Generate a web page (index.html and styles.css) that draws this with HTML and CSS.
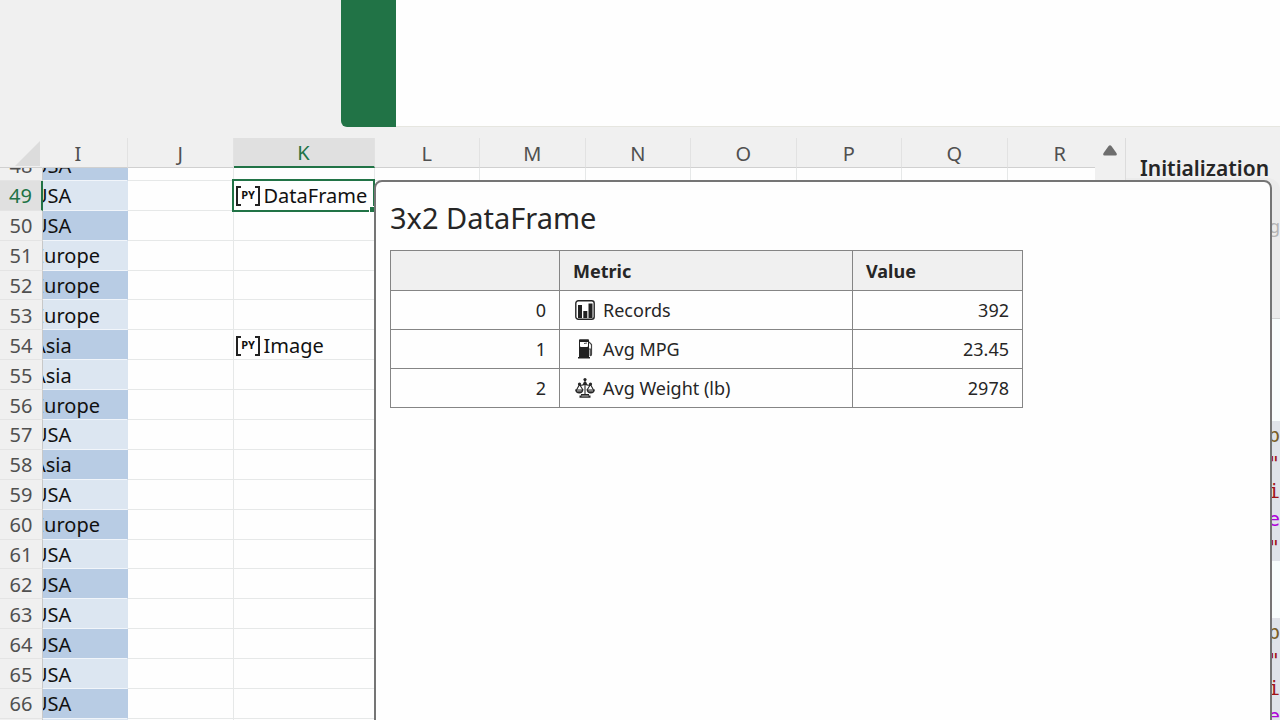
FILE: index.html
```html
<!DOCTYPE html>
<html lang="en">
<head>
    <meta charset="UTF-8">
    <meta name="viewport" content="width=device-width, initial-scale=1.0">
    <title>3x2 DataFrame</title>
    <link rel="stylesheet" href="styles.css">
</head>
<body>
  <header class="top-area">
    <div class="top-accent"></div>
    <div class="top-page"></div>
  </header>

  <main class="workspace">
    <section class="sheet">
      <div class="sheet-main">
        <table class="grid grid-head">
          <thead>
            <tr id="columns">
              <th class="row-num"><svg class="corner" viewBox="0 0 25 25"><path d="M25 0V25H0Z" fill="#dcdcdc"/></svg></th>
            </tr>
          </thead>
        </table>
        <div class="grid-scroll">
          <table class="grid grid-body">
            <tbody id="rows"></tbody>
          </table>
        </div>
      </div>
      <div class="scrollbar">
        <button class="scroll-up" aria-label="Scroll up"><svg width="14" height="11" viewBox="0 0 14 11"><path d="M5.6 1Q7-.6 8.4 1L13.4 8Q14.6 10.500 12.500 10.500H1.500Q-.6 10.500 .6 8Z" fill="#6e6e6e"/></svg></button>
      </div>
    </section>

    <aside class="editor">
      <h2 class="editor-title">Initialization</h2>
      <div class="editor-card"><span>ng</span></div>
      <div class="code">
        <div class="code-block">
          <div class="fn">p</div>
          <div class="str">"</div>
          <div class="str">i</div>
          <div class="kw">e</div>
          <div class="str">"</div>
        </div>
        <div class="code-block">
          <div class="fn">p</div>
          <div class="str">"</div>
          <div class="str">i</div>
          <div class="kw">e</div>
        </div>
      </div>
    </aside>

    <section class="card">
      <h1>3x2 DataFrame</h1>
      <table class="frame">
        <thead>
          <tr>
            <th class="index"></th>
            <th class="metric">Metric</th>
            <th class="value">Value</th>
          </tr>
        </thead>
        <tbody>
          <tr>
            <td class="num">0</td>
            <td>
              <div class="label"><svg class="icon" viewBox="0 0 20 20"><rect x=".8" y=".8" width="18.400" height="18.400" rx="2.500" fill="#fff" stroke="#262626" stroke-width="1.400"/><path d="M3 5H7V18H3ZM8.300 11H12.300V18H8.300ZM13.500 3.500H17.500V18H13.500Z" fill="#222"/></svg>Records</div>
            </td>
            <td class="num">392</td>
          </tr>
          <tr>
            <td class="num">1</td>
            <td>
              <div class="label"><svg class="icon" viewBox="0 0 20 20"><path d="M4 1Q4 .3 5 .3H13Q14 .3 14 1V18H15V19.500H3V18H4Z" fill="#222"/><path d="M5 3H13V7Q13 8 12 8H6Q5 8 5 7Z" fill="#fff"/><path d="M9 4.500L12 4" stroke="#222" stroke-width=".8"/><path d="M14 3L16.500 5.500V15Q16.500 17 15.200 16.500V10H14" fill="none" stroke="#444" stroke-width="1.200"/></svg>Avg MPG</div>
            </td>
            <td class="num">23.45</td>
          </tr>
          <tr>
            <td class="num">2</td>
            <td>
              <div class="label"><svg class="icon" viewBox="0 0 20 20"><g fill="none" stroke="#262626" stroke-width="1.100"><path d="M10 1V17M3.500 6.500Q7 8.500 10 5.500Q13 8.500 16.500 6.500M4.500 6.500L1.500 12M4.500 6.500L8 12M15.500 6.500L12 12M15.500 6.500L18.500 12"/></g><g fill="#262626"><circle cx="10" cy="1.600" r="1.600"/><circle cx="10" cy="5.500" r="1.800"/><circle cx="4.500" cy="6" r="1.600"/><circle cx="15.500" cy="6" r="1.600"/><path d="M0 11.500H8.500Q8 15.500 4.300 15.500Q.5 15.500 0 11.500ZM11.500 11.500H20Q19.500 15.500 15.700 15.500Q12 15.500 11.500 11.500ZM6 16H14V17.500H15.500V19.800H4.500V17.500H6Z"/></g><path d="M2 12.900H6.500M13.500 12.900H18M6.500 18H13.500" stroke="#fff" stroke-width=".7"/></svg>Avg Weight (lb)</div>
            </td>
            <td class="num">2978</td>
          </tr>
        </tbody>
      </table>
    </section>
  </main>

  <script src="script.js"></script>
</body>
</html>
```

FILE: styles.css
```css
* {
    box-sizing: border-box;
}

html, body {
    margin: 0;
    padding: 0;
    height: 100%;
    overflow: hidden;
    background-color: #f0f0f0;
    font-family: "Noto Sans", "Open Sans", sans-serif;
    color: #262626;
}

body {
    display: flex;
    flex-direction: column;
}

/* Top area */
.top-area {
    display: flex;
    flex: none;
    height: 127px;
    margin-bottom: 11px;
    padding-left: 341px;
}

.top-accent {
    width: 55px;
    background-color: #217346;
    border-bottom-left-radius: 6px;
}

.top-page {
    flex: 1;
    background-color: #fefefe;
    border-bottom: 1px solid #e6e6e0;
}

/* Workspace */
.workspace {
    position: relative;
    display: flex;
    flex: 1;
    min-height: 0;
}

.sheet {
    display: flex;
    flex: 1;
    min-width: 0;
}

.sheet-main {
    display: flex;
    flex-direction: column;
    flex: 1;
    min-width: 0;
    overflow: hidden;
}

.grid {
    flex: none;
    table-layout: fixed;
    border-collapse: separate;
    border-spacing: 0;
    width: 1113px;
}

.grid th, .grid td {
    padding: 2px 0 0;
    overflow: hidden;
    white-space: nowrap;
}

.grid th {
    font-size: 20px;
    font-weight: 400;
    line-height: 26px;
    color: #505050;
}

.grid .row-num {
    width: 43px;
    background-color: #f0f0f0;
    border-right: 1px solid #c8c8c8;
}

.grid .col-i {
    width: 85px;
}

.grid .col-k {
    width: 141px;
}

.grid-head th {
    height: 29px;
    border-right: 1px solid #e2e2e2;
    border-bottom: 1px solid #d0d0d0;
}

.grid-head .row-num {
    border-color: #f0f0f0;
    border-bottom-color: #d0d0d0;
}

.grid-head .col-i {
    padding-right: 14px;
}

.grid-head .col-k {
    color: #217346;
    background-color: #e0e0e0;
    border-bottom: 2px solid #217346;
}

.corner {
    display: block;
    width: 25px;
    height: 25px;
    margin-left: 15px;
}

.grid-scroll {
    flex: 1;
    min-height: 0;
    overflow: hidden;
    background-color: #fefefe;
}

/* first row is scrolled halfway under the header */
.grid-body {
    height: 598px;
    margin-top: -17px;
}

.grid-body th {
    border-bottom: 1px solid #e4e4e4;
}

.grid-body td {
    font-size: 20px;
    line-height: 26px;
    color: #111;
    border-right: 1px solid #e6e8e8;
    border-bottom: 1px solid #e6e8e8;
}

.grid-body td.col-i {
    background-color: #dce6f1;
    border-right-color: #dce6f1;
    border-bottom-color: #f1f5fa;
}

.grid-body tr:nth-child(odd) td.col-i {
    background-color: #b8cce4;
    border-right-color: #b8cce4;
}

.country {
    display: block;
    margin-left: -10px;
}

.grid-body .current .row-num {
    color: #217346;
    background-color: #e0e0e0;
    border-right: 2px solid #217346;
}

.grid-body td.selected {
    position: relative;
    overflow: visible;
}

.selected::before {
    content: "";
    position: absolute;
    inset: -2px -1px -2px -2px;
    border: 2px solid #217346;
}

.selected::after {
    content: "";
    position: absolute;
    right: -1px;
    bottom: -2px;
    width: 5px;
    height: 5px;
    background-color: #217346;
    border: 1px solid #fff;
    border-width: 1px 0 0 1px;
}

.object {
    display: flex;
    align-items: center;
    gap: 3px;
    padding-left: 2px;
}

.py {
    display: flex;
    justify-content: space-between;
    width: 25px;
    height: 20px;
    font-size: 11px;
    font-weight: 700;
    line-height: 18px;
}

.py::before, .py::after {
    content: "";
    width: 4px;
    border: 2px solid #222;
}

.py::before {
    border-right: 0;
}

.py::after {
    border-left: 0;
}

.scrollbar {
    width: 31px;
    border-right: 1px solid #dcdcdc;
}

.scroll-up {
    display: block;
    width: 100%;
    height: 28px;
    padding: 0;
    border: 0;
    background: none;
    line-height: 1;
}

/* Code editor */
.editor {
    display: flex;
    flex-direction: column;
    width: 154px;
}

.editor-title {
    flex: none;
    margin: 0;
    padding: 14px 0 0 14px;
    height: 40px;
    font-size: 21px;
    font-weight: 600;
    line-height: 32px;
    white-space: nowrap;
}

.editor-card {
    flex: none;
    height: 141px;
    padding-top: 34px;
    background-color: #ebebeb;
    border-bottom: 1px solid #d2d2d2;
    border-top-right-radius: 12px;
    font-size: 18px;
    line-height: 28px;
    color: #b4b4b4;
    text-align: right;
}

.code {
    display: flex;
    flex-direction: column;
    flex: 1;
    gap: 57px;
    padding-top: 102px;
    background-color: #f7fdfd;
    font-family: "DejaVu Sans Mono", monospace;
    font-size: 20px;
    line-height: 28px;
    text-align: right;
}

.code-block {
    background-color: #dfe3e9;
}

.fn {
    color: #795e26;
}

.str {
    color: #a31515;
}

.kw {
    color: #af00db;
}

/* DataFrame card */
.card {
    position: absolute;
    top: 42px;
    right: 8px;
    bottom: -10px;
    left: 374px;
    padding: 16px 14px;
    background-color: #fefefe;
    border: 2px solid #757575;
    border-radius: 8px;
}

.card h1 {
    margin: 0 0 12px;
    font-size: 29px;
    font-weight: 400;
    line-height: 40px;
}

.frame {
    table-layout: fixed;
    border-collapse: collapse;
    width: 633px;
    font-size: 18px;
    line-height: 26px;
}

.frame th, .frame td {
    height: 39px;
    padding: 0 13px;
    border: 1px solid #858585;
    text-align: left;
}

.frame th {
    height: 40px;
    background-color: #f0f0f0;
    font-weight: 700;
}

.frame .index {
    width: 169px;
}

.frame .value {
    width: 170px;
}

.frame .num {
    text-align: right;
}

.label {
    display: flex;
    align-items: center;
    gap: 8px;
    padding-left: 2px;
}

.icon {
    width: 20px;
    height: 20px;
}
```

FILE: script.js
```js
const columns = ["I", "J", "K", "L", "M", "N", "O", "P", "Q", "R"];
const firstRow = 48;
const countries = [
  "USA", "USA", "USA", "Europe", "Europe", "Europe", "Asia", "Asia", "Europe", "USA",
  "Asia", "USA", "Europe", "USA", "USA", "USA", "USA", "USA", "USA", "USA"
];
const objects = { 49: "DataFrame", 54: "Image" };

document.getElementById("columns").innerHTML += columns
  .map(name => `<th class="col-${name.toLowerCase()}">${name}</th>`)
  .join("");

document.getElementById("rows").innerHTML = countries.map((country, i) => {
  const row = firstRow + i;
  const cells = columns.map(name => {
    if (name === "I") {
      return `<td class="col-i"><span class="country">${country}</span></td>`;
    }
    if (name === "K") {
      const object = objects[row]
        ? `<div class="object"><span class="py"><span>P</span><span>Y</span></span>${objects[row]}</div>`
        : "";
      return `<td class="col-k${row === 49 ? " selected" : ""}">${object}</td>`;
    }
    return "<td></td>";
  });
  return `<tr class="${row === 49 ? "current" : ""}"><th class="row-num">${row}</th>${cells.join("")}</tr>`;
}).join("");
```
